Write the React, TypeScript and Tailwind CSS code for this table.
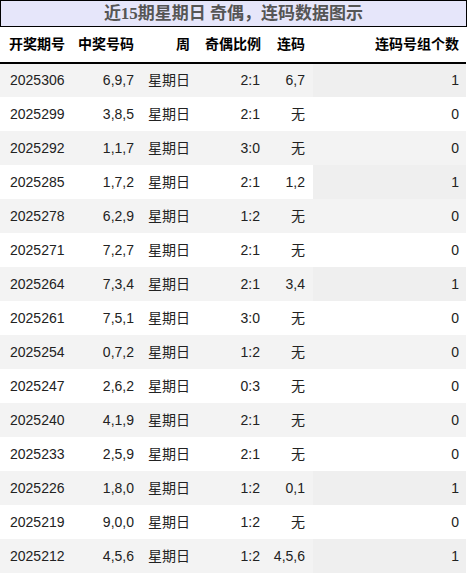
import React from 'react'

type Row = {
  issue: string
  nums: string
  week: string
  ratio: string
  lian: string
  count: number
}

const rows: Row[] = [
  { issue: '2025306', nums: '6,9,7', week: '星期日', ratio: '2:1', lian: '6,7', count: 1 },
  { issue: '2025299', nums: '3,8,5', week: '星期日', ratio: '2:1', lian: '无', count: 0 },
  { issue: '2025292', nums: '1,1,7', week: '星期日', ratio: '3:0', lian: '无', count: 0 },
  { issue: '2025285', nums: '1,7,2', week: '星期日', ratio: '2:1', lian: '1,2', count: 1 },
  { issue: '2025278', nums: '6,2,9', week: '星期日', ratio: '1:2', lian: '无', count: 0 },
  { issue: '2025271', nums: '7,2,7', week: '星期日', ratio: '2:1', lian: '无', count: 0 },
  { issue: '2025264', nums: '7,3,4', week: '星期日', ratio: '2:1', lian: '3,4', count: 1 },
  { issue: '2025261', nums: '7,5,1', week: '星期日', ratio: '3:0', lian: '无', count: 0 },
  { issue: '2025254', nums: '0,7,2', week: '星期日', ratio: '1:2', lian: '无', count: 0 },
  { issue: '2025247', nums: '2,6,2', week: '星期日', ratio: '0:3', lian: '无', count: 0 },
  { issue: '2025240', nums: '4,1,9', week: '星期日', ratio: '2:1', lian: '无', count: 0 },
  { issue: '2025233', nums: '2,5,9', week: '星期日', ratio: '2:1', lian: '无', count: 0 },
  { issue: '2025226', nums: '1,8,0', week: '星期日', ratio: '1:2', lian: '0,1', count: 1 },
  { issue: '2025219', nums: '9,0,0', week: '星期日', ratio: '1:2', lian: '无', count: 0 },
  { issue: '2025212', nums: '4,5,6', week: '星期日', ratio: '1:2', lian: '4,5,6', count: 1 },
]

export default function App() {
  return (
    <div className="w-[468px] h-[574px] bg-white overflow-hidden font-['Liberation_Sans','Noto_Sans_CJK_SC',sans-serif]">
      {/* Title */}
      <div className="w-[467px] h-[27px] border border-black bg-[#e6e6fa] flex items-center justify-center text-[17px] font-bold text-[#555] font-['Liberation_Serif','Noto_Sans_CJK_SC',serif]">
        近15期星期日 奇偶，连码数据图示
      </div>

      <table className="w-[466px] table-fixed border-collapse text-[14px]">
        <colgroup>
          <col className="w-[72px]" />
          <col className="w-[70px]" />
          <col className="w-[56px]" />
          <col className="w-[70px]" />
          <col className="w-[45px]" />
          <col className="w-[153px]" />
        </colgroup>
        <thead>
          <tr className="h-[36px] border-b-2 border-black text-black font-bold">
            <th className="pl-[9px] text-left font-bold">开奖期号</th>
            <th className="pr-[8px] text-right font-bold">中奖号码</th>
            <th className="pr-[8px] text-right font-bold">周</th>
            <th className="pr-[7px] text-right font-bold">奇偶比例</th>
            <th className="pr-[8px] text-right font-bold">连码</th>
            <th className="pr-[7px] text-right font-bold">连码号组个数</th>
          </tr>
        </thead>
        <tbody className="text-[#222]">
          {rows.map((r, i) => (
            <tr key={r.issue} className={`h-[34px] ${i % 2 === 0 ? 'bg-[#f3f3f3]' : 'bg-white'}`}>
              <td className="pl-[10px] text-left">{r.issue}</td>
              <td className="pr-[8px] text-right">{r.nums}</td>
              <td className="pl-[6px] text-left">{r.week}</td>
              <td className="pr-[8px] text-right">{r.ratio}</td>
              <td className="pr-[8px] text-right">{r.lian}</td>
              <td className={`pr-[7px] text-right ${r.count > 0 ? 'bg-[#efefef]' : ''}`}>{r.count}</td>
            </tr>
          ))}
        </tbody>
      </table>
    </div>
  )
}
